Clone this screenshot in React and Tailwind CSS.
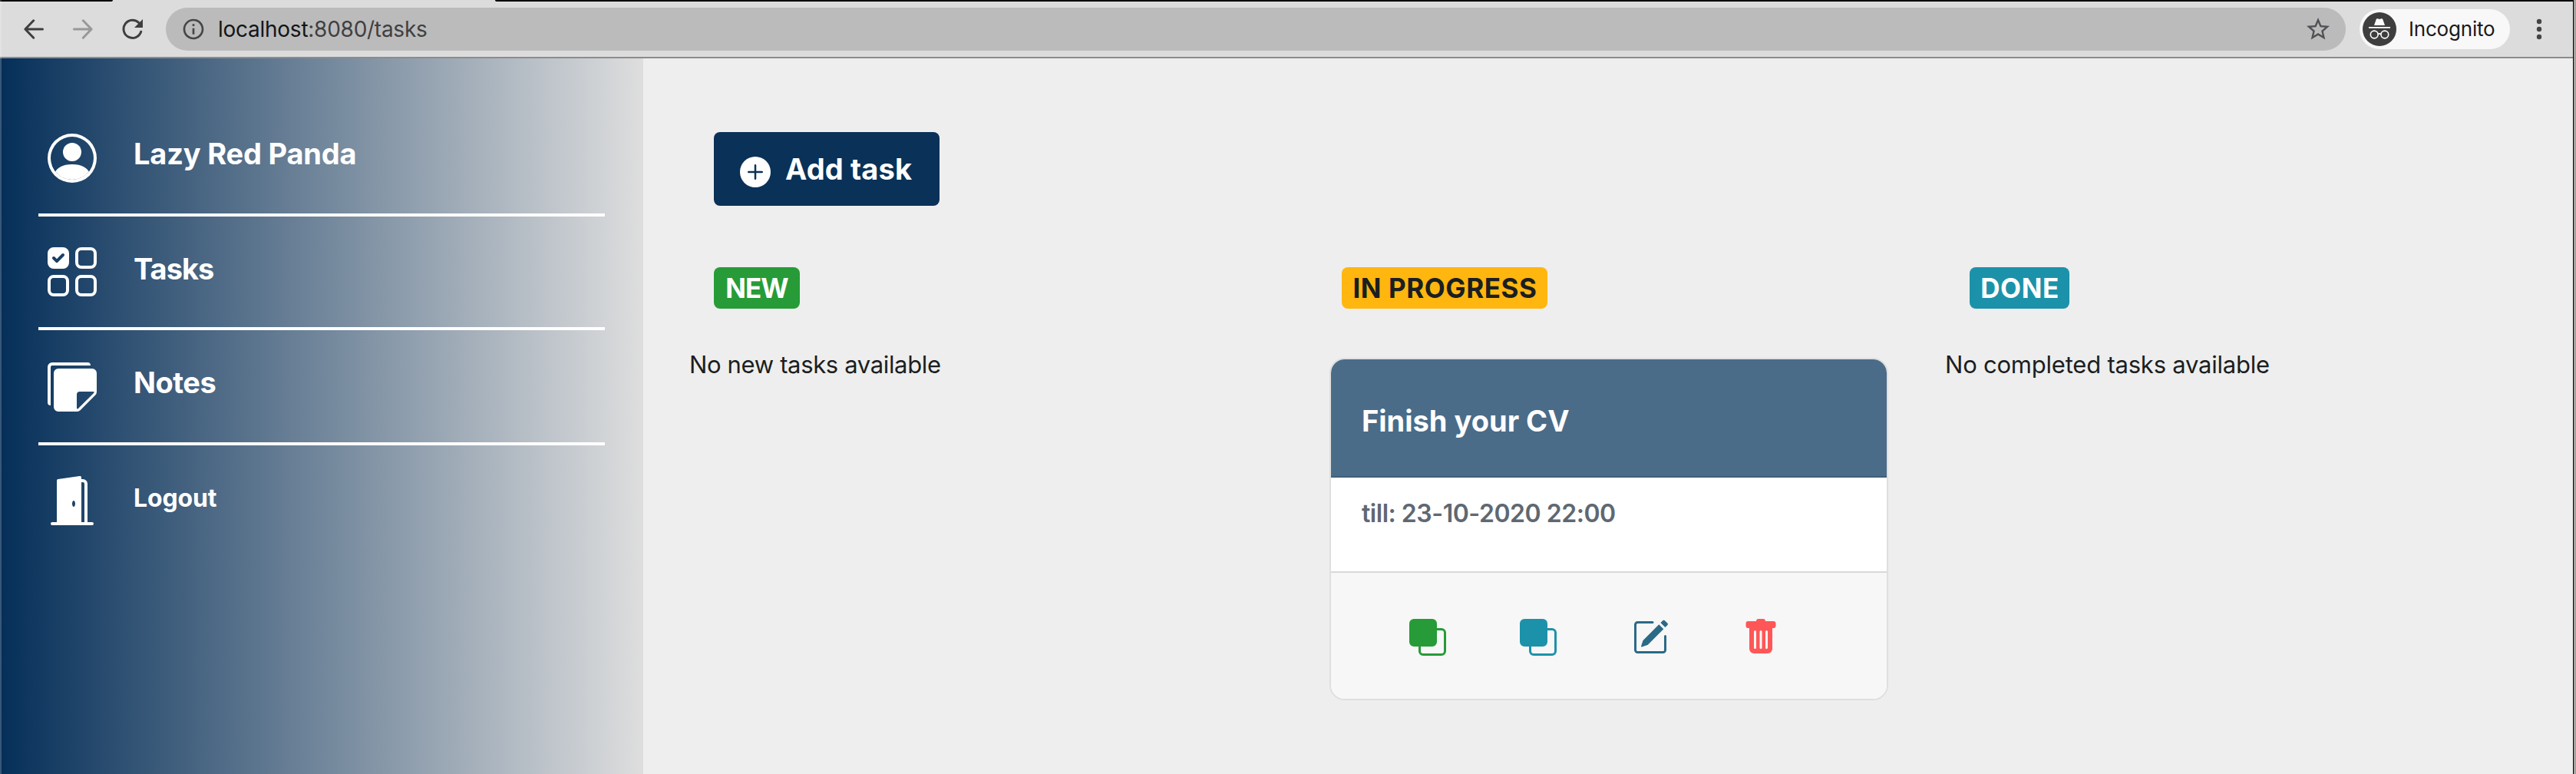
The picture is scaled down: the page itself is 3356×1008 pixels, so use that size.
import React from 'react';
import {
  BsUiChecksGrid,
  BsStickiesFill,
  BsDoorOpenFill,
  BsPlusCircleFill,
  BsFront,
  BsPencilSquare,
  BsTrashFill,
} from 'react-icons/bs';
import { MdStarBorder, MdInfoOutline } from 'react-icons/md';

function PersonCircle({ className }) {
  return (
    <svg viewBox="0 0 16 16" fill="currentColor" className={className}>
      <path d="M13.468 12.37C12.758 11.226 11.195 10 8 10s-4.757 1.225-5.468 2.37A6.987 6.987 0 0 0 8 15a6.987 6.987 0 0 0 5.468-2.63z" />
      <path fillRule="evenodd" d="M8 9a3 3 0 1 0 0-6 3 3 0 0 0 0 6z" />
      <path fillRule="evenodd" d="M8 1a7 7 0 1 0 0 14A7 7 0 0 0 8 1zM0 8a8 8 0 1 1 16 0A8 8 0 0 1 0 8z" />
    </svg>
  );
}

function Arrow({ className }) {
  return (
    <svg viewBox="0 0 26 26" fill="none" stroke="currentColor" strokeWidth="3" strokeLinecap="round" strokeLinejoin="round" className={className}>
      <path d="M24.5 13H2M12.7 1.8L1.9 13l10.8 11.2" />
    </svg>
  );
}

function Reload({ className }) {
  return (
    <svg viewBox="0 0 28 28" className={className}>
      <path d="M24.7 17.3A11.6 11.6 0 1 1 22 5.8" fill="none" stroke="currentColor" strokeWidth="3" strokeLinecap="round" />
      <path d="M27 1v11H16z" fill="currentColor" />
    </svg>
  );
}

function IncognitoBadge() {
  return (
    <svg viewBox="0 0 44 44" className="size-11 shrink-0">
      <circle cx="22" cy="22" r="22" fill="#3e3e3e" />
      <path d="M15 17l2.6-7.6c.3-.9 1-1.3 1.9-1.1l2.5.6 2.5-.6c.9-.2 1.6.2 1.9 1.1L29 17z" fill="#fff" />
      <path d="M8 19h28v1.8H8z" fill="#fff" />
      <g fill="none" stroke="#fff" strokeWidth="1.6">
        <circle cx="15.2" cy="29" r="4.9" />
        <circle cx="28.8" cy="29" r="4.9" />
        <path d="M20 28.6c1.2-.9 2.8-.9 4 0" />
      </g>
    </svg>
  );
}

function Toolbar() {
  return (
    <header className="h-[76px] shrink-0 flex flex-col bg-[#dcdcdc] border-b-2 border-[#8c8c8c]">
      <div className="h-[2px] flex shrink-0">
        <div className="w-[147px] bg-black rounded-br-[2px]" />
        <div className="w-[498px]" />
        <div className="grow bg-black rounded-bl-[2px]" />
      </div>
      <div className="h-[72px] flex items-center">
        <Arrow className="ml-[31px] size-[26px] text-[#3f3f3f]" />
        <Arrow className="ml-[38px] size-[26px] text-[#989898] rotate-180" />
        <Reload className="ml-[38px] size-7 text-[#3f3f3f]" />
        <div className="ml-[29px] w-[2840px] h-14 rounded-full bg-[#bbbbbb] flex items-center shrink-0">
          <MdInfoOutline className="ml-5 size-8 text-[#44464a]" />
          <span className="ml-4 text-[28px] leading-[56px] tracking-[-0.26px] text-[#3f4042]">
            <span className="text-[#141517]">localhost</span>:8080/tasks
          </span>
          <MdStarBorder className="ml-auto mr-[18px] size-9 text-[#505256]" />
        </div>
        <div className="ml-[18px] w-[196px] h-[52px] rounded-full bg-[#f8f8f8] flex items-center pl-1 shrink-0">
          <IncognitoBadge />
          <span className="ml-4 text-[26px] leading-[52px] tracking-[-0.2px] text-[#1a1a1a]">Incognito</span>
        </div>
        <svg viewBox="0 0 8 28" className="ml-[34px] w-2 h-7 shrink-0" fill="#444">
          <circle cx="4" cy="4" r="3.2" />
          <circle cx="4" cy="14" r="3.2" />
          <circle cx="4" cy="24" r="3.2" />
        </svg>
      </div>
    </header>
  );
}

function NavItem({ icon: Icon, label, className, labelClass }) {
  return (
    <a className={`flex items-start pl-3 border-white ${className}`}>
      <Icon className="size-16 shrink-0" />
      <span className={`ml-12 leading-[48px] font-bold ${labelClass}`}>{label}</span>
    </a>
  );
}

function Sidebar() {
  return (
    <nav className="w-[838px] shrink-0 px-[50px] flex flex-col text-white bg-linear-to-r/srgb from-[#052f59] to-[#dedede]">
      <NavItem icon={PersonCircle} label="Lazy Red Panda" className="h-[206px] pt-[98px] border-b-4" labelClass="mt-[2px] text-[38px] tracking-[-0.2px]" />
      <NavItem icon={BsUiChecksGrid} label="Tasks" className="h-[148px] pt-10 border-b-4" labelClass="mt-1 text-[38px] tracking-[-1px]" />
      <NavItem icon={BsStickiesFill} label="Notes" className="h-[150px] pt-[42px] border-b-4" labelClass="mt-[2px] text-[38px] tracking-[-0.5px]" />
      <NavItem icon={BsDoorOpenFill} label="Logout" className="pt-10" labelClass="mt-[5px] text-[32px] tracking-[-0.15px]" />
    </nav>
  );
}

function Column({ title, badgeClass, children }) {
  return (
    <section className="w-[818px] shrink-0 flex flex-col items-start">
      <h2 className={`ml-8 h-[54px] rounded-lg flex items-center justify-center text-[35px] leading-none font-bold whitespace-nowrap ${badgeClass}`}>{title}</h2>
      {children}
    </section>
  );
}

function EmptyNote({ children, className }) {
  return <p className={`mt-[49px] text-[31px] leading-[48px] text-[#1b1e21] ${className}`}>{children}</p>;
}

function TaskCard() {
  return (
    <article className="mt-16 ml-4 w-[728px] h-[446px] flex flex-col rounded-[20px] border-2 border-[#dfdfdf] bg-white overflow-hidden">
      <div className="h-[154px] shrink-0 pl-10 pt-[56px] bg-[#4a6c88] border-b-2 border-[#425f79]">
        <h3 className="text-[38px] leading-[48px] font-bold text-white">Finish your CV</h3>
      </div>
      <div className="h-[122px] shrink-0 pl-10 pt-[23px]">
        <p className="text-[32px] leading-[48px] font-semibold tracking-[-0.47px] text-[#5f6872]">till: 23-10-2020 22:00</p>
      </div>
      <div className="grow flex items-start gap-24 pl-[102px] pt-[60px] bg-[#f7f7f7] border-t-2 border-[#d8d8d8]">
        <BsFront className="size-12 text-[#279b37]" />
        <BsFront className="size-12 text-[#1c92aa]" />
        <BsPencilSquare className="ml-[2px] size-12 text-[#2b6a87]" />
        <BsTrashFill className="size-12 text-[#ff5757]" />
      </div>
    </article>
  );
}

function Board() {
  return (
    <main className="grow pt-24 pl-[60px] bg-[#eeeeee]">
      <button className="ml-8 w-[294px] h-24 pl-[34px] rounded-lg bg-[#0a3157] text-white flex items-center">
        <BsPlusCircleFill className="mt-2 size-10" />
        <span className="ml-[19px] text-[38px] leading-[48px] font-bold tracking-[0.17px]">Add task</span>
      </button>
      <div className="mt-20 flex">
        <Column title="NEW" badgeClass="w-[112px] bg-[#279b37] text-white tracking-[-0.9px]">
          <EmptyNote className="tracking-[-0.35px]">No new tasks available</EmptyNote>
        </Column>
        <Column title="IN PROGRESS" badgeClass="w-[268px] pl-px bg-[#ffb60f] text-[#1b1e21] tracking-[0.57px]">
          <TaskCard />
        </Column>
        <Column title="DONE" badgeClass="w-[130px] pl-px bg-[#1c92aa] text-white tracking-[0.6px]">
          <EmptyNote className="tracking-[-0.22px]">No completed tasks available</EmptyNote>
        </Column>
      </div>
    </main>
  );
}

export default function App() {
  return (
    <div className="relative w-[3356px] h-[1008px] overflow-hidden flex font-['Inter',sans-serif]">
      <div className="w-[3352px] shrink-0 flex flex-col">
        <Toolbar />
        <div className="grow flex">
          <Sidebar />
          <Board />
        </div>
      </div>
      <div className="w-px bg-black" />
      <div className="grow bg-[#a6a19f]" />
      <div className="absolute inset-y-0 left-0 w-[2px] bg-white/20" />
    </div>
  );
}
